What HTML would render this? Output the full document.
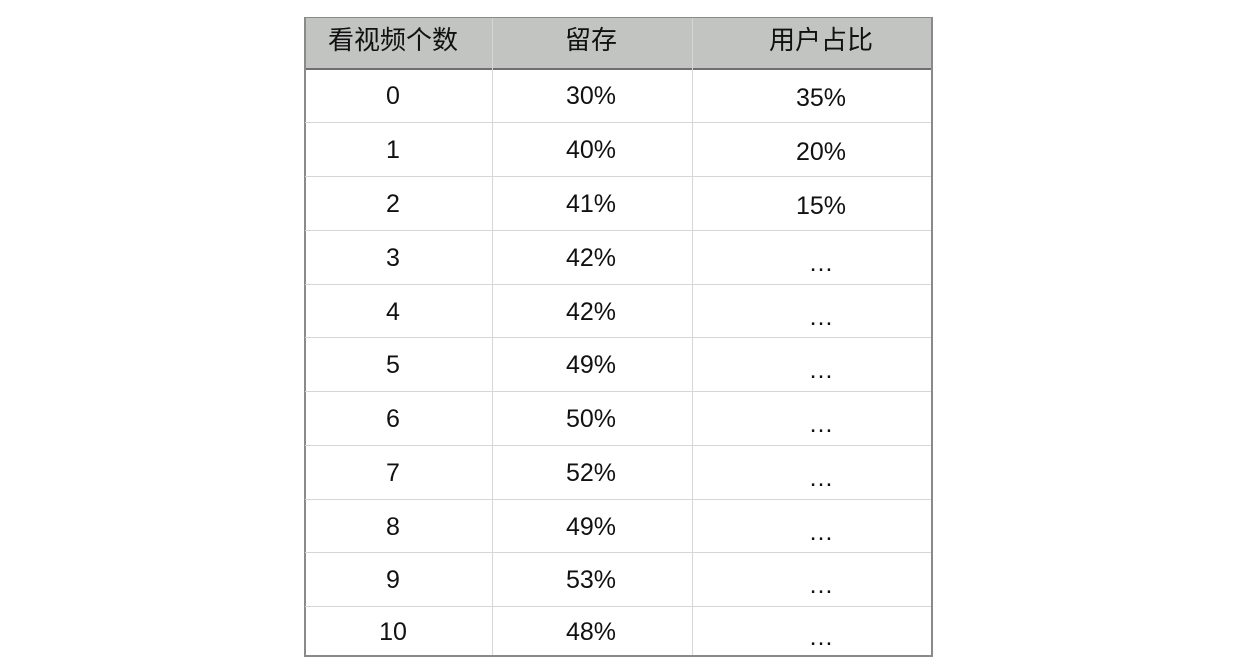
<!DOCTYPE html>
<html><head><meta charset="utf-8"><style>
body{margin:0;width:1240px;height:671px;background:#fff;position:relative;overflow:hidden;font-family:"Liberation Sans","Noto Sans CJK SC",sans-serif;color:#111}
.t{position:absolute;left:304px;top:17px;width:625px;height:637px;border:2px solid #8a8a8a;border-top-width:1px}
.h{position:absolute;left:0;top:0;width:100%;height:50px;background:#c2c4c2;border-bottom:2px solid #6f6f6f}
.vl{position:absolute;top:0;bottom:0;width:1px;background:#d6d6d6}
.hl{position:absolute;left:0;right:0;height:1px;background:#d6d6d6}
.c{position:absolute;text-align:center;font-size:25px;line-height:30px}
.k{font-size:26px}
</style></head><body>
<div class="t">
<div class="h"></div>
<div class="vl" style="left:186px"></div>
<div class="vl" style="left:386px"></div>
</div>
<div id="g"></div>
<script>
var bounds=[68,122,176,230,284,337,391,445,499,552,606,656];
var a=["0","1","2","3","4","5","6","7","8","9","10"];
var b=["30%","40%","41%","42%","42%","49%","50%","52%","49%","53%","48%"];
var c=["35%","20%","15%","…","…","…","…","…","…","…","…"];
var h="";
for(var i=1;i<bounds.length-1;i++)h+='<div class="hl" style="position:absolute;left:305px;width:626px;top:'+bounds[i]+'px"></div>';
function cell(x,w,y,t,dy,cls){return '<div class="c '+(cls||"")+'" style="left:'+x+'px;width:'+w+'px;top:'+(y+dy)+'px">'+t+'</div>';}
h+=cell(305,176,25,"看视频个数",0,"k")+cell(491,200,25,"留存",0,"k")+cell(701,240,25,"用户占比",0,"k");
for(var i=0;i<11;i++){var y=(bounds[i]+bounds[i+1])/2-15;h+=cell(305,176,y,a[i],1)+cell(491,200,y,b[i],1)+cell(701,240,y,c[i],c[i]=="…"?6:3);}
document.getElementById("g").innerHTML=h;
</script>
</body></html>
